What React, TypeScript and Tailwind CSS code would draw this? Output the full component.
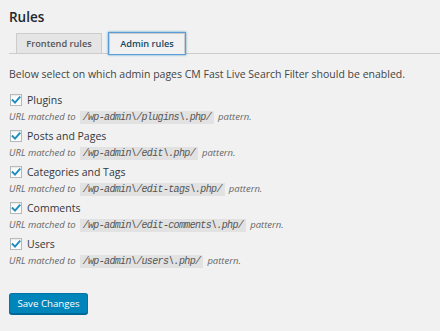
import React from "react";

const items: [string, string][] = [
  ["Plugins", "/wp-admin\\/plugins\\.php/"],
  ["Posts and Pages", "/wp-admin\\/edit\\.php/"],
  ["Categories and Tags", "/wp-admin\\/edit-tags\\.php/"],
  ["Comments", "/wp-admin\\/edit-comments\\.php/"],
  ["Users", "/wp-admin\\/users\\.php/"],
];

function CheckBox() {
  return (
    <span className="relative flex h-[12px] w-[12px] shrink-0 items-center justify-center border border-[#b4b9be] bg-white shadow-[inset_0_1px_2px_rgba(0,0,0,0.1)]">
      <svg width="10" height="10" viewBox="0 0 10 10" className="block">
        <path d="M1.6 5.2 L4 7.6 L8.6 2.4" fill="none" stroke="#1e8cbe" strokeWidth="1.9" strokeLinecap="square" />
      </svg>
    </span>
  );
}

export default function App() {
  return (
    <div className="h-[331px] w-[440px] overflow-hidden bg-[#f1f1f1] pl-[9px] pt-[8px] font-['Open_Sans',sans-serif] text-[10.5px] text-[#444]">
      <h2 className="text-[13.5px] font-semibold leading-[18px] text-[#23282d]">Rules</h2>
      <div className="mt-[7px] flex items-end gap-[7px] border-b border-[#ccc] pl-[7px]">
        <div className="flex h-[20px] w-[86px] items-center justify-center border border-b-0 border-[#ccc] bg-[#e5e5e5] text-[9.2px] font-semibold text-[#555]">
          Frontend rules
        </div>
        <div className="-mb-px flex h-[21px] w-[76px] items-center justify-center border border-[#ccc] border-b-[#f1f1f1] bg-[#f1f1f1] text-[9.2px] font-semibold text-[#124964] shadow-[0_0_0_1px_#5b9dd9,0_0_2px_1px_rgba(30,140,190,0.8)]">
          Admin rules
        </div>
      </div>
      <p className="mt-[13px] leading-[15px]">
        Below select on which admin pages CM Fast Live Search Filter should be enabled.
      </p>
      <div className="mt-[10px] flex flex-col">
        {items.map(([label, pattern]) => (
          <div key={label} className="mb-[4px] flex flex-col">
            <label className="flex h-[16px] items-center gap-[5px] pl-px text-[#32373c]">
              <CheckBox />
              <span className="leading-[16px]">{label}</span>
            </label>
            <p className="mt-[2px] flex h-[14px] items-center text-[9.5px] italic text-[#666]">
              <span>URL matched to</span>
              <code className="ml-[4px] flex h-[13px] items-center bg-[#e2e2e2] px-[3px] font-['Liberation_Mono',monospace] text-[10px] italic tracking-[-0.65px] text-[#555]">
                {pattern}
              </code>
              <span className="ml-[4px]">pattern.</span>
            </p>
          </div>
        ))}
      </div>
      <button className="mt-[21px] flex h-[21px] w-[79px] items-center justify-center rounded-[3px] border border-[#0073aa] border-b-[#006799] bg-[#0085ba] text-[9.7px] leading-none text-white shadow-[0_1px_0_#006799]">
        Save Changes
      </button>
    </div>
  );
}
